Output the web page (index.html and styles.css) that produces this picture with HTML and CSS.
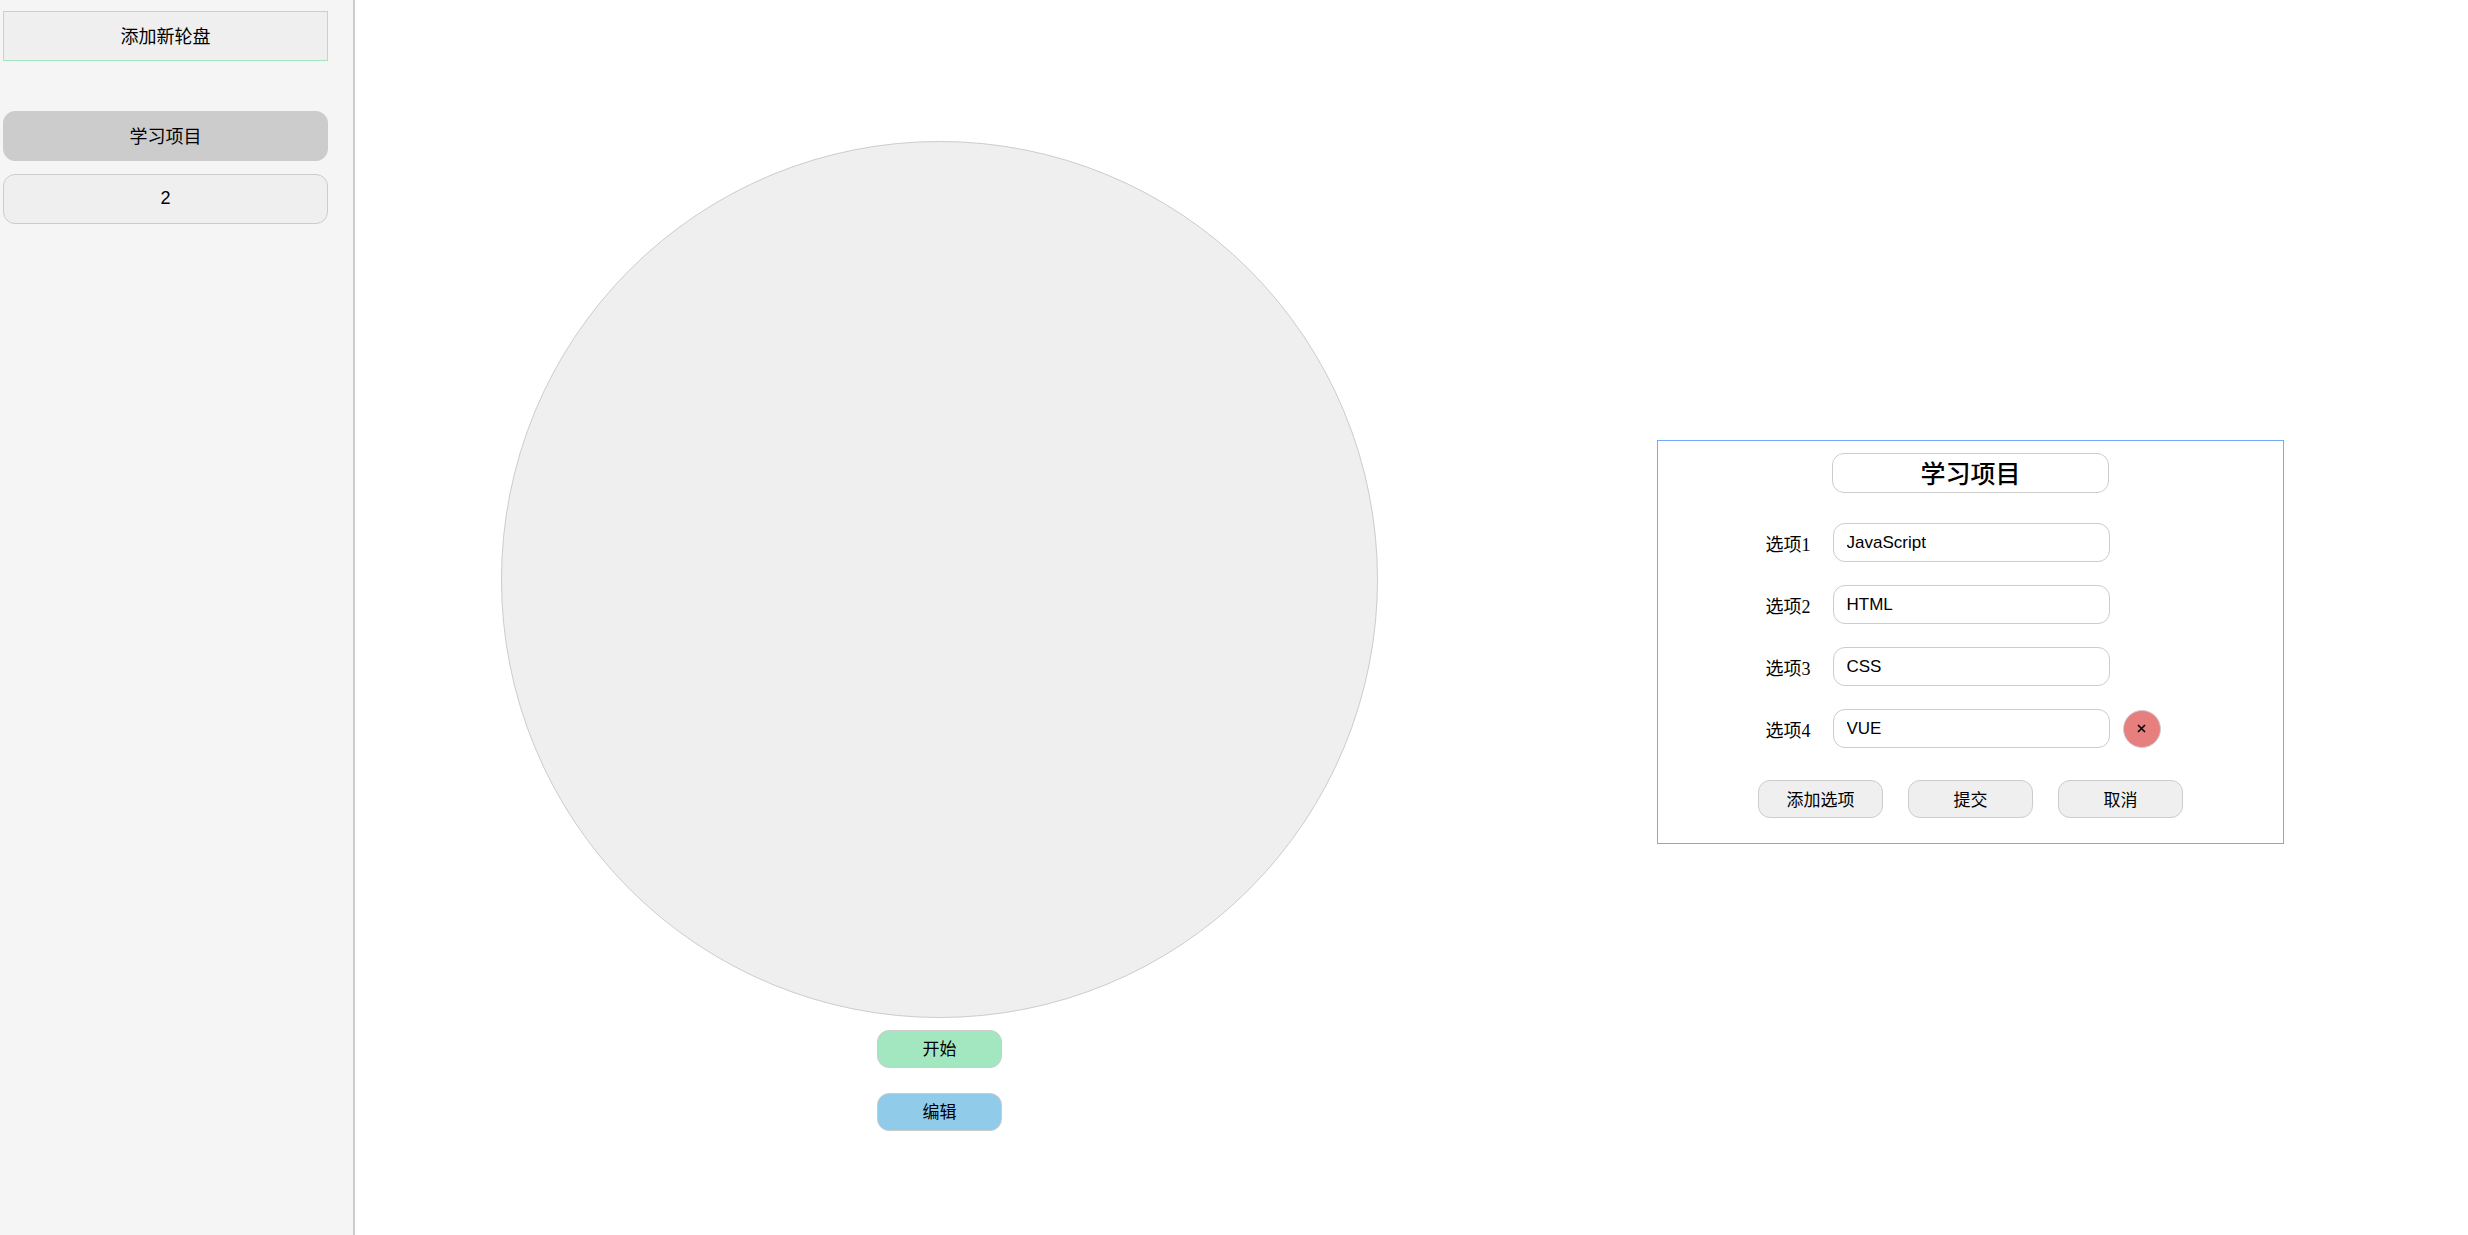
FILE: index.html
```
<!DOCTYPE html>
<html lang="zh-CN">
<head>
<meta charset="utf-8">
<meta name="viewport" content="width=device-width, initial-scale=1">
<title>轮盘</title>
<link rel="stylesheet" href="styles.css">
</head>
<body>
<div class="app">
  <aside class="sidebar">
    <button type="button" class="wheel-item wheel-add">添加新轮盘</button>
    <button type="button" class="wheel-item is-active">学习项目</button>
    <button type="button" class="wheel-item">2</button>
  </aside>
  <main class="main">
    <section class="stage">
      <div class="wheel"></div>
      <button type="button" class="btn btn-start">开始</button>
      <button type="button" class="btn btn-edit">编辑</button>
    </section>
    <form class="editor">
      <input class="field title-field" type="text" value="学习项目" aria-label="轮盘名称">
      <div class="options">
        <div class="option">
          <label for="option-1">选项1</label>
          <input class="field" id="option-1" type="text" value="JavaScript">
        </div>
        <div class="option">
          <label for="option-2">选项2</label>
          <input class="field" id="option-2" type="text" value="HTML">
        </div>
        <div class="option">
          <label for="option-3">选项3</label>
          <input class="field" id="option-3" type="text" value="CSS">
        </div>
        <div class="option">
          <label for="option-4">选项4</label>
          <input class="field" id="option-4" type="text" value="VUE">
          <button type="button" class="remove" aria-label="删除选项4">
            <svg width="9" height="9" viewBox="0 0 9 9" aria-hidden="true"><path d="M1 1l7 7M8 1L1 8" stroke="#000" stroke-width="1.6" fill="none"/></svg>
          </button>
        </div>
      </div>
      <div class="actions">
        <button type="button" class="btn">添加选项</button>
        <button type="submit" class="btn">提交</button>
        <button type="button" class="btn">取消</button>
      </div>
    </form>
  </main>
</div>
</body>
</html>
```
FILE: styles.css
```
* {
  box-sizing: border-box;
}

body {
  margin: 0;
  background: #fff;
  color: #000;
  font: 17px "Liberation Serif", "Noto Sans CJK SC", serif;
}

button,
input {
  margin: 0;
  border: 1px solid #ccc;
  border-radius: 12px;
  color: #000;
  font: 17px "Liberation Sans", "Noto Sans CJK SC", sans-serif;
}

button {
  padding: 0 0 2px;
  background: #efefef;
  cursor: pointer;
}

.app {
  display: flex;
  min-height: 100vh;
}

.sidebar {
  display: flex;
  flex: 0 0 355px;
  flex-direction: column;
  gap: 13px;
  padding: 11px 25px 11px 3px;
  border-right: 2px solid #ccc;
  background: #f5f5f5;
}

.wheel-item {
  height: 50px;
  font-size: 18px;
}

.wheel-add {
  margin-bottom: 37px;
  border-color: #a3e7c1;
  border-radius: 0;
}

.is-active {
  background: #ccc;
}

.main {
  display: flex;
  flex: 1;
  align-items: center;
  justify-content: space-between;
  padding: 49px 184px 0 146px;
}

.stage {
  display: flex;
  flex-direction: column;
  align-items: center;
  padding-bottom: 12px;
}

.wheel {
  width: 71vh;
  aspect-ratio: 1;
  border: 1px solid #ccc;
  border-radius: 50%;
  background: #efefef;
}

.btn {
  width: 125px;
  height: 38px;
}

.btn-start {
  margin: 12px 0 25px;
  background: #a3e7c1;
}

.btn-edit {
  background: #90cbea;
}

.editor {
  display: flex;
  flex: 0 0 627px;
  flex-direction: column;
  align-items: center;
  padding: 12px 12px 25px;
  border: 1px solid #6fadfa;
}

.field {
  width: 277px;
  height: 39px;
  padding: 0 13px;
  background: #fff;
}

.title-field {
  height: 40px;
  padding-bottom: 2px;
  font-size: 25px;
  font-weight: 500;
  text-align: center;
}

.options {
  display: flex;
  flex-direction: column;
  gap: 23px;
  width: 420px;
  margin: 30px 0 32px;
}

.option {
  display: flex;
  align-items: center;
}

.option label {
  width: 72px;
  padding-left: 5px;
  font-size: 18px;
}

.remove {
  display: grid;
  place-items: center;
  width: 38px;
  height: 38px;
  margin-left: 13px;
  padding: 0;
  border-radius: 50%;
  background: #e77f7f;
}

.actions {
  display: flex;
  gap: 25px;
}
```
